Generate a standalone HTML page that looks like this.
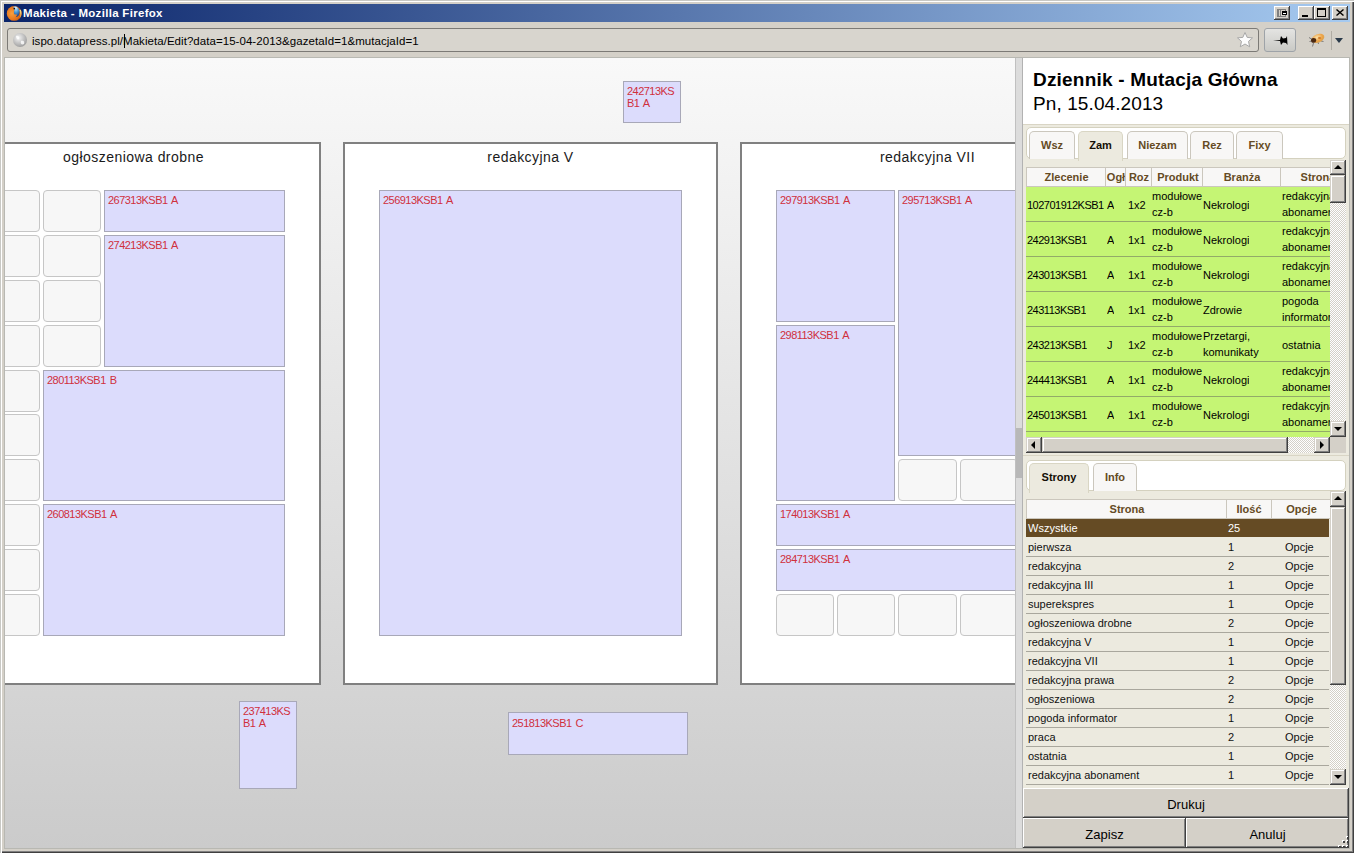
<!DOCTYPE html><html><head><meta charset="utf-8"><style>
*{margin:0;padding:0;box-sizing:border-box}
html,body{width:1354px;height:853px;overflow:hidden;background:#d4d0c8;font-family:"Liberation Sans",sans-serif}
.a{position:absolute}
.wb{position:absolute;top:2px;width:16px;height:14px;background:#d4d0c8;box-shadow:inset -1px -1px 0 #404040, inset 1px 1px 0 #fff, inset -2px -2px 0 #808080}
.page{position:absolute;width:375px;height:543px;border:2px solid #808080;background:#fff}
.ptitle{position:absolute;left:0;top:5px;width:371px;text-align:center;font:14px/16px "Liberation Sans",sans-serif;letter-spacing:0.45px;color:#1a1a1a}
.blk{position:absolute;background:#dcdcfc;border:1px solid #a8a8b8;color:#d0303c;font:11px/12px "Liberation Sans",sans-serif;letter-spacing:-0.53px;word-spacing:1.5px;padding:3px 0 0 3px;overflow:hidden;white-space:nowrap}
.emp{position:absolute;background:#f7f7f7;border:1px solid #c6c6c6;border-radius:4px}
.btn3d{position:absolute;background:#d4d0c8;box-shadow:inset -1px -1px 0 #404040, inset 1px 1px 0 #fff, inset -2px -2px 0 #808080, inset 2px 2px 0 #d4d0c8}
.sbb{position:absolute;width:16px;height:16px;background:#d4d0c8;box-shadow:inset -1px -1px 0 #404040, inset 1px 1px 0 #d4d0c8, inset -2px -2px 0 #808080, inset 2px 2px 0 #fff}
.track{position:absolute;background:repeating-conic-gradient(#d4d0c8 0 25%,#fff 0 50%) 0 0/2px 2px}
.tri-u{position:absolute;width:0;height:0;border-left:4px solid transparent;border-right:4px solid transparent;border-bottom:4px solid #000}
.tri-d{position:absolute;width:0;height:0;border-left:4px solid transparent;border-right:4px solid transparent;border-top:4px solid #000}
.tri-l{position:absolute;width:0;height:0;border-top:4px solid transparent;border-bottom:4px solid transparent;border-right:4px solid #000}
.tri-r{position:absolute;width:0;height:0;border-top:4px solid transparent;border-bottom:4px solid transparent;border-left:4px solid #000}
.tab{position:absolute;height:28px;border:1px solid #cbc7bd;border-bottom:none;border-radius:5px 5px 0 0;background:#f8f7f6;color:#654b24;font:bold 11px/13px "Liberation Sans",sans-serif;text-align:center;padding-top:7px}
.tab.act{background:#eceadf;border-color:#d9d6c4;color:#140f06;height:30px}
.hdr{position:absolute;background:#f8f7f6;border-top:1px solid #cbc7bd;border-bottom:1px solid #cbc7bd;height:20px}
.hc{position:absolute;top:0;height:18px;border-left:1px solid #cbc7bd;color:#654b24;font:bold 11px/18px "Liberation Sans",sans-serif;text-align:center;white-space:nowrap;overflow:hidden}
.gr{position:absolute;left:0;height:35px;background:#c5f574;border-bottom:1px solid #93ab68}
.gc{position:absolute;font:11px/16px "Liberation Sans",sans-serif;color:#000;white-space:nowrap;overflow:hidden}
.sr{position:absolute;left:0;width:303px;height:19px;border-bottom:1px solid #a6a49a;font:11px/18px "Liberation Sans",sans-serif;color:#111}
.sr span{position:absolute;top:0;white-space:nowrap}
</style></head><body>
<div class="a" style="left:0;top:0;width:1354px;height:853px;background:#d4d0c8;box-shadow:inset 1px 1px 0 #c8c8c4, inset 2px 2px 0 #fff, inset -1px -1px 0 #404040, inset -2px -2px 0 #808080"></div>
<div class="a" style="left:4px;top:4px;width:1346px;height:18px;background:linear-gradient(to right,#0a246a,#a6caf0)">
<svg class="a" style="left:2px;top:1px" width="16" height="16" viewBox="0 0 16 16">
<defs><radialGradient id="gl" cx="0.4" cy="0.1" r="0.9"><stop offset="0" stop-color="#e0f6ff"/><stop offset="0.5" stop-color="#4a9ad8"/><stop offset="1" stop-color="#183c80"/></radialGradient>
<radialGradient id="fx" cx="0.35" cy="0.5" r="0.7"><stop offset="0" stop-color="#f6a040"/><stop offset="0.6" stop-color="#e8761c"/><stop offset="0.9" stop-color="#c85a14"/><stop offset="1" stop-color="#a04010"/></radialGradient>
<linearGradient id="tl" x1="0" y1="0" x2="0" y2="1"><stop offset="0" stop-color="#ffe890"/><stop offset="1" stop-color="#e89030"/></linearGradient></defs>
<circle cx="8.2" cy="8.4" r="7.4" fill="url(#fx)"/>
<path d="M14.6 4.5 C16 7 16 11 13.5 13.5 C14.5 11 14.6 8 13.2 5.5Z" fill="url(#tl)"/>
<path d="M7.5 1.6 C10.5 1 13.5 3 13.6 7 C13.7 10 11.8 12 9.6 12.2 C11 11 11.2 9.8 10.4 9.2 C9.4 9.8 8.2 9.4 8 8.4 C7.6 7 8.6 6 8 4.6 C7.8 3.6 7.4 2.6 7.5 1.6Z" fill="url(#gl)"/>
<circle cx="8.3" cy="3.6" r="0.85" fill="#101010"/>
</svg>
<div class="a" style="left:19px;top:2px;font:bold 11.5px/14px 'Liberation Sans',sans-serif;color:#fff;letter-spacing:0.3px;white-space:nowrap">Makieta - Mozilla Firefox</div>
<div class="wb" style="left:1270px"><div class="a" style="left:3px;top:3px;width:9px;height:8px;border:1px solid #808080;border-bottom-width:1px"></div><div class="a" style="left:4px;top:4px;width:1px;height:6px;background:#808080"></div><div class="a" style="left:6px;top:4px;width:1px;height:6px;background:#808080"></div><div class="a" style="left:8px;top:5px;width:5px;height:4px;border:1px solid #000;border-top-width:2px;background:#fff"></div></div>
<div class="wb" style="left:1294px"><div class="a" style="left:4px;top:9px;width:6px;height:2px;background:#000"></div></div>
<div class="wb" style="left:1310px"><div class="a" style="left:3px;top:2px;width:9px;height:9px;border:1px solid #000;border-top-width:2px"></div></div>
<div class="wb" style="left:1328px"><svg class="a" style="left:4px;top:3px" width="8" height="7" viewBox="0 0 8 7"><path d="M0.5 0.5 L7.5 6.5 M7.5 0.5 L0.5 6.5" stroke="#000" stroke-width="1.4"/></svg></div>
</div>
<div class="a" style="left:7px;top:28px;width:1252px;height:24px;border:1px solid #7c7a76;border-radius:3px;background:#d8d5ce"></div>
<svg class="a" style="left:12px;top:32px" width="16" height="16" viewBox="0 0 16 16"><defs><radialGradient id="gb" cx="0.4" cy="0.35" r="0.7"><stop offset="0" stop-color="#f4f4f4"/><stop offset="1" stop-color="#9a9a9a"/></radialGradient></defs>
<circle cx="8" cy="8" r="7" fill="url(#gb)"/><path d="M4 4 C6 3 8 5 7 7 C6 8 4 7 4 4Z M9 9 C11 8 13 9 12 12 C10 13 8 12 9 9Z" fill="#fff" opacity="0.8"/></svg>
<div class="a" style="left:32px;top:34px;font:11.5px/14px 'Liberation Sans',sans-serif;color:#000;white-space:nowrap;letter-spacing:0.05px">ispo.datapress.pl/Makieta/Edit?data=15-04-2013&amp;gazetaId=1&amp;mutacjaId=1</div>
<div class="a" style="left:124px;top:34px;width:1px;height:14px;background:#000"></div>
<svg class="a" style="left:1236px;top:31px" width="18" height="18" viewBox="0 0 18 18"><path d="M9 1.5 L11.2 6.4 L16.5 6.9 L12.5 10.4 L13.7 15.8 L9 13 L4.3 15.8 L5.5 10.4 L1.5 6.9 L6.8 6.4Z" fill="#fdfdfd" stroke="#a8a8a8" stroke-width="1" stroke-linejoin="round"/></svg>
<div class="a" style="left:1264px;top:28px;width:32px;height:24px;border:1px solid #9ea3a8;border-radius:3px;background:linear-gradient(#e4e4e2,#c9c9c5)"></div>
<svg class="a" style="left:1272px;top:35px" width="17" height="11" viewBox="0 0 17 11"><path d="M1 5.5 L8 5 L9 1 L11 3.5 L14 3 L15 1 L15.5 10 L14 8 L11 7.5 L9 10 L8 6 Z" fill="#000"/></svg>
<svg class="a" style="left:1306px;top:31px" width="20" height="18" viewBox="0 0 20 18">
<defs><radialGradient id="bg1" cx="0.45" cy="0.35" r="0.7"><stop offset="0" stop-color="#fbe0a8"/><stop offset="0.6" stop-color="#eca448"/><stop offset="1" stop-color="#d8a050"/></radialGradient></defs>
<path d="M3 6.5 L5.5 8 M3.5 10.5 L5.5 10 M6.5 15.5 L7.5 12 M17.5 10.5 L15 10 M12.5 13 L12 11" stroke="#707070" stroke-width="0.9"/>
<ellipse cx="12" cy="7.3" rx="6.6" ry="4.2" fill="url(#bg1)" transform="rotate(-22 12 7.3)"/>
<ellipse cx="7.6" cy="9.4" rx="2.6" ry="2.3" fill="#3a1a08" opacity="0.9"/>
<ellipse cx="13.5" cy="7" rx="1.6" ry="1.1" fill="#c86a18" opacity="0.8"/>
</svg>
<div class="a" style="left:1331px;top:31px;width:1px;height:19px;background:#b0aca4"></div>
<div class="a" style="left:1335px;top:38px;width:0;height:0;border-left:4px solid transparent;border-right:4px solid transparent;border-top:5px solid #2a3a4a"></div>
<div class="a" style="left:4px;top:57px;width:1346px;height:792px;border:1px solid #b8b8b2;background:#fff"></div>
<div class="a" style="left:5px;top:58px;width:1010px;height:790px;overflow:hidden;background:linear-gradient(#f9f9f9,#cbcbcb)">
<div class="page" style="left:-59.00px;top:84.00px;width:375.00px;height:543.00px"><div class="ptitle">ogłoszeniowa drobne</div></div>
<div class="emp" style="left:-23.00px;top:132.00px;width:58.00px;height:42.00px"></div>
<div class="emp" style="left:38.00px;top:132.00px;width:58.00px;height:42.00px"></div>
<div class="emp" style="left:-23.00px;top:177.00px;width:58.00px;height:42.00px"></div>
<div class="emp" style="left:38.00px;top:177.00px;width:58.00px;height:42.00px"></div>
<div class="emp" style="left:-23.00px;top:222.00px;width:58.00px;height:42.00px"></div>
<div class="emp" style="left:38.00px;top:222.00px;width:58.00px;height:42.00px"></div>
<div class="emp" style="left:-23.00px;top:267.00px;width:58.00px;height:42.00px"></div>
<div class="emp" style="left:38.00px;top:267.00px;width:58.00px;height:42.00px"></div>
<div class="blk" style="left:99.00px;top:132.00px;width:181.00px;height:42.00px">267313KSB1 A</div>
<div class="blk" style="left:99.00px;top:177.00px;width:181.00px;height:132.00px">274213KSB1 A</div>
<div class="emp" style="left:-23.00px;top:312.00px;width:58.00px;height:42.00px"></div>
<div class="emp" style="left:-23.00px;top:356.00px;width:58.00px;height:42.00px"></div>
<div class="emp" style="left:-23.00px;top:401.00px;width:58.00px;height:42.00px"></div>
<div class="emp" style="left:-23.00px;top:446.00px;width:58.00px;height:42.00px"></div>
<div class="emp" style="left:-23.00px;top:491.00px;width:58.00px;height:42.00px"></div>
<div class="emp" style="left:-23.00px;top:536.00px;width:58.00px;height:42.00px"></div>
<div class="blk" style="left:38.00px;top:312.00px;width:242.00px;height:131.00px">280113KSB1 B</div>
<div class="blk" style="left:38.00px;top:446.00px;width:242.00px;height:132.00px">260813KSB1 A</div>
<div class="page" style="left:338.00px;top:84.00px;width:375.00px;height:543.00px"><div class="ptitle">redakcyjna V</div></div>
<div class="blk" style="left:374.00px;top:132.00px;width:303.00px;height:446.00px">256913KSB1 A</div>
<div class="page" style="left:735.00px;top:84.00px;width:375.00px;height:543.00px"><div class="ptitle">redakcyjna VII</div></div>
<div class="blk" style="left:771.00px;top:132.00px;width:119.00px;height:132.00px">297913KSB1 A</div>
<div class="blk" style="left:893.00px;top:132.00px;width:181.00px;height:266.00px">295713KSB1 A</div>
<div class="blk" style="left:771.00px;top:267.00px;width:119.00px;height:176.00px">298113KSB1 A</div>
<div class="emp" style="left:893.00px;top:401.00px;width:59.00px;height:42.00px"></div>
<div class="emp" style="left:955.00px;top:401.00px;width:58.00px;height:42.00px"></div>
<div class="emp" style="left:1016.00px;top:401.00px;width:58.00px;height:42.00px"></div>
<div class="blk" style="left:771.00px;top:446.00px;width:303.00px;height:42.00px">174013KSB1 A</div>
<div class="blk" style="left:771.00px;top:491.00px;width:303.00px;height:42.00px">284713KSB1 A</div>
<div class="emp" style="left:771.00px;top:536.00px;width:58.00px;height:42.00px"></div>
<div class="emp" style="left:832.00px;top:536.00px;width:58.00px;height:42.00px"></div>
<div class="emp" style="left:893.00px;top:536.00px;width:59.00px;height:42.00px"></div>
<div class="emp" style="left:955.00px;top:536.00px;width:58.00px;height:42.00px"></div>
<div class="emp" style="left:1016.00px;top:536.00px;width:58.00px;height:42.00px"></div>
<div class="blk" style="left:618.00px;top:23.00px;width:58.00px;height:42.00px">242713KS<br>B1 A</div>
<div class="blk" style="left:234.00px;top:643.00px;width:58.00px;height:88.00px">237413KS<br>B1 A</div>
<div class="blk" style="left:503.00px;top:654.00px;width:180.00px;height:43.00px;padding-top:4px">251813KSB1 C</div>
</div>
<div class="a" style="left:1015px;top:58px;width:8px;height:790px;background:#dcdcdc;border-left:1px solid #c0c0c0;border-right:1px solid #b2b2b2"></div>
<div class="a" style="left:1016px;top:428px;width:6px;height:50px;background:#b8b8b8"></div>
<div class="a" style="left:1023px;top:58px;width:326px;height:790px;background:#fff;overflow:hidden">
<div class="a" style="left:10px;top:10.6px;font:bold 19px/22px 'Liberation Sans',sans-serif;color:#000;white-space:nowrap;letter-spacing:0.2px">Dziennik - Mutacja Główna</div>
<div class="a" style="left:10px;top:35px;font:19px/22px 'Liberation Sans',sans-serif;color:#000;white-space:nowrap;letter-spacing:0.1px">Pn, 15.04.2013</div>
<div class="a" style="left:0px;top:66px;width:326px;height:332px;background:#eceadf;border-top:1px solid #d9d5c5;border-bottom:1px solid #d9d5c5"></div>
<div class="a" style="left:0px;top:398px;width:326px;height:332px;background:#eceadf"></div>
<div class="a" style="left:3px;top:69px;width:320px;height:32px;background:#fff;border:1px solid #d4d1bf;border-radius:5px"></div>
<div class="tab" style="left:6px;top:73px;width:46px;height:28px">Wsz</div>
<div class="tab act" style="left:55px;top:73px;width:45px;height:30px">Zam</div>
<div class="tab" style="left:104px;top:73px;width:61px;height:28px">Niezam</div>
<div class="tab" style="left:167px;top:73px;width:44px;height:28px">Rez</div>
<div class="tab" style="left:213px;top:73px;width:47px;height:28px">Fixy</div>
<div class="a" style="left:3px;top:102px;width:304px;height:277px;overflow:hidden">
<div class="hdr" style="left:0px;top:7px;width:330px;height:20px">
<div class="hc" style="left:0px;width:80px">Zlecenie</div>
<div class="hc" style="left:79px;width:21px">Ogł</div>
<div class="hc" style="left:99px;width:27px">Roz</div>
<div class="hc" style="left:125px;width:53px">Produkt</div>
<div class="hc" style="left:176px;width:79px">Branża</div>
<div class="hc" style="left:254px;width:75px">Strona</div>
</div>
<div class="gr" style="top:27px;width:330px">
<div class="gc" style="left:1px;top:10.0px;letter-spacing:-0.5px">102701912KSB1</div>
<div class="gc" style="left:81px;top:10.0px">A</div>
<div class="gc" style="left:102px;top:10.0px">1x2</div>
<div class="gc" style="left:126px;top:1.0px">modułowe<br>cz-b</div>
<div class="gc" style="left:177px;top:10.0px">Nekrologi</div>
<div class="gc" style="left:256px;top:1.0px">redakcyjna<br>abonament</div>
</div>
<div class="gr" style="top:62px;width:330px">
<div class="gc" style="left:1px;top:10.0px;letter-spacing:-0.5px">242913KSB1</div>
<div class="gc" style="left:81px;top:10.0px">A</div>
<div class="gc" style="left:102px;top:10.0px">1x1</div>
<div class="gc" style="left:126px;top:1.0px">modułowe<br>cz-b</div>
<div class="gc" style="left:177px;top:10.0px">Nekrologi</div>
<div class="gc" style="left:256px;top:1.0px">redakcyjna<br>abonament</div>
</div>
<div class="gr" style="top:97px;width:330px">
<div class="gc" style="left:1px;top:10.0px;letter-spacing:-0.5px">243013KSB1</div>
<div class="gc" style="left:81px;top:10.0px">A</div>
<div class="gc" style="left:102px;top:10.0px">1x1</div>
<div class="gc" style="left:126px;top:1.0px">modułowe<br>cz-b</div>
<div class="gc" style="left:177px;top:10.0px">Nekrologi</div>
<div class="gc" style="left:256px;top:1.0px">redakcyjna<br>abonament</div>
</div>
<div class="gr" style="top:132px;width:330px">
<div class="gc" style="left:1px;top:10.0px;letter-spacing:-0.5px">243113KSB1</div>
<div class="gc" style="left:81px;top:10.0px">A</div>
<div class="gc" style="left:102px;top:10.0px">1x1</div>
<div class="gc" style="left:126px;top:1.0px">modułowe<br>cz-b</div>
<div class="gc" style="left:177px;top:10.0px">Zdrowie</div>
<div class="gc" style="left:256px;top:1.0px">pogoda<br>informator</div>
</div>
<div class="gr" style="top:167px;width:330px">
<div class="gc" style="left:1px;top:10.0px;letter-spacing:-0.5px">243213KSB1</div>
<div class="gc" style="left:81px;top:10.0px">J</div>
<div class="gc" style="left:102px;top:10.0px">1x2</div>
<div class="gc" style="left:126px;top:1.0px">modułowe<br>cz-b</div>
<div class="gc" style="left:177px;top:1.0px">Przetargi,<br>komunikaty</div>
<div class="gc" style="left:256px;top:10.0px">ostatnia</div>
</div>
<div class="gr" style="top:202px;width:330px">
<div class="gc" style="left:1px;top:10.0px;letter-spacing:-0.5px">244413KSB1</div>
<div class="gc" style="left:81px;top:10.0px">A</div>
<div class="gc" style="left:102px;top:10.0px">1x1</div>
<div class="gc" style="left:126px;top:1.0px">modułowe<br>cz-b</div>
<div class="gc" style="left:177px;top:10.0px">Nekrologi</div>
<div class="gc" style="left:256px;top:1.0px">redakcyjna<br>abonament</div>
</div>
<div class="gr" style="top:237px;width:330px">
<div class="gc" style="left:1px;top:10.0px;letter-spacing:-0.5px">245013KSB1</div>
<div class="gc" style="left:81px;top:10.0px">A</div>
<div class="gc" style="left:102px;top:10.0px">1x1</div>
<div class="gc" style="left:126px;top:1.0px">modułowe<br>cz-b</div>
<div class="gc" style="left:177px;top:10.0px">Nekrologi</div>
<div class="gc" style="left:256px;top:1.0px">redakcyjna<br>abonament</div>
</div>
<div class="gr" style="top:272px;width:330px">
<div class="gc" style="left:1px;top:10.0px;letter-spacing:-0.5px">245113KSB1</div>
<div class="gc" style="left:81px;top:10.0px">A</div>
<div class="gc" style="left:102px;top:10.0px">1x1</div>
<div class="gc" style="left:126px;top:1.0px">modułowe<br>cz-b</div>
<div class="gc" style="left:177px;top:10.0px">Nekrologi</div>
<div class="gc" style="left:256px;top:1.0px">redakcyjna<br>abonament</div>
</div>
</div>
<div class="track" style="left:307px;top:118px;width:16px;height:261px"></div>
<div class="sbb" style="left:307px;top:102px;width:16px;height:15px"><div class="tri-u" style="left:4px;top:5px"></div></div>
<div class="sbb" style="left:307px;top:117px;width:16px;height:28px"></div>
<div class="sbb" style="left:307px;top:363px;width:16px;height:16px"><div class="tri-d" style="left:4px;top:6px"></div></div>
<div class="track" style="left:3px;top:379px;width:304px;height:16px"></div>
<div class="sbb" style="left:3px;top:379px;width:16px;height:16px"><div class="tri-l" style="left:5px;top:4px"></div></div>
<div class="sbb" style="left:19px;top:379px;width:246px;height:16px"></div>
<div class="sbb" style="left:291px;top:379px;width:16px;height:16px"><div class="tri-r" style="left:6px;top:4px"></div></div>
<div class="a" style="left:307px;top:379px;width:16px;height:16px;background:#d4d0c8"></div>
<div class="a" style="left:3px;top:402px;width:320px;height:31px;background:#fff;border:1px solid #d4d1bf;border-radius:5px"></div>
<div class="tab act" style="left:6px;top:405px;width:60px;height:30px">Strony</div>
<div class="tab" style="left:70px;top:405px;width:44px;height:28px">Info</div>
<div class="a" style="left:3px;top:441px;width:304px;height:286px;overflow:hidden">
<div class="hdr" style="left:0;top:0;width:304px;height:20px;border-left:1px solid #cbc7bd">
<div class="hc" style="left:0px;width:200px;border-left:none">Strona</div>
<div class="hc" style="left:199px;width:45px;">Ilość</div>
<div class="hc" style="left:244px;width:60px;">Opcje</div>
</div>
<div class="sr" style="top:20px;height:18px;background:#654b24;color:#fff;border-bottom:none"><span style="left:2px;top:0px">Wszystkie</span><span style="left:202px;top:0px">25</span></div>
<div class="sr" style="top:39px;border-bottom-color:#a9a79d"><span style="left:2px">pierwsza</span><span style="left:202px">1</span><span style="left:259px">Opcje</span></div>
<div class="sr" style="top:58px;border-bottom-color:#a9a79d"><span style="left:2px">redakcyjna</span><span style="left:202px">2</span><span style="left:259px">Opcje</span></div>
<div class="sr" style="top:77px;border-bottom-color:#a9a79d"><span style="left:2px">redakcyjna III</span><span style="left:202px">1</span><span style="left:259px">Opcje</span></div>
<div class="sr" style="top:96px;border-bottom-color:#a9a79d"><span style="left:2px">superekspres</span><span style="left:202px">1</span><span style="left:259px">Opcje</span></div>
<div class="sr" style="top:115px;border-bottom-color:#a9a79d"><span style="left:2px">ogłoszeniowa drobne</span><span style="left:202px">2</span><span style="left:259px">Opcje</span></div>
<div class="sr" style="top:134px;border-bottom-color:#a9a79d"><span style="left:2px">redakcyjna V</span><span style="left:202px">1</span><span style="left:259px">Opcje</span></div>
<div class="sr" style="top:153px;border-bottom-color:#a9a79d"><span style="left:2px">redakcyjna VII</span><span style="left:202px">1</span><span style="left:259px">Opcje</span></div>
<div class="sr" style="top:172px;border-bottom-color:#a9a79d"><span style="left:2px">redakcyjna prawa</span><span style="left:202px">2</span><span style="left:259px">Opcje</span></div>
<div class="sr" style="top:191px;border-bottom-color:#a9a79d"><span style="left:2px">ogłoszeniowa</span><span style="left:202px">2</span><span style="left:259px">Opcje</span></div>
<div class="sr" style="top:210px;border-bottom-color:#a9a79d"><span style="left:2px">pogoda informator</span><span style="left:202px">1</span><span style="left:259px">Opcje</span></div>
<div class="sr" style="top:229px;border-bottom-color:#a9a79d"><span style="left:2px">praca</span><span style="left:202px">2</span><span style="left:259px">Opcje</span></div>
<div class="sr" style="top:248px;border-bottom-color:#a9a79d"><span style="left:2px">ostatnia</span><span style="left:202px">1</span><span style="left:259px">Opcje</span></div>
<div class="sr" style="top:267px;border-bottom-color:#a9a79d"><span style="left:2px">redakcyjna abonament</span><span style="left:202px">1</span><span style="left:259px">Opcje</span></div>
</div>
<div class="track" style="left:307px;top:433px;width:16px;height:294px"></div>
<div class="sbb" style="left:307px;top:433px;width:16px;height:16px"><div class="tri-u" style="left:4px;top:5px"></div></div>
<div class="sbb" style="left:307px;top:449px;width:16px;height:178px"></div>
<div class="sbb" style="left:307px;top:711px;width:16px;height:16px"><div class="tri-d" style="left:4px;top:6px"></div></div>
<div class="btn3d" style="left:0px;top:730px;width:326px;height:30px;font:13px/33px 'Liberation Sans',sans-serif;color:#000;text-align:center">Drukuj</div>
<div class="btn3d" style="left:0px;top:760px;width:163px;height:30px;font:13px/33px 'Liberation Sans',sans-serif;color:#000;text-align:center">Zapisz</div>
<div class="btn3d" style="left:163px;top:760px;width:163px;height:30px;font:13px/33px 'Liberation Sans',sans-serif;color:#000;text-align:center">Anuluj</div>
</div>
<div class="a" style="left:1347px;top:837px;width:2px;height:2px;background:#404040;box-shadow:-1px -1px 0 #fff"></div>
<div class="a" style="left:1343px;top:841px;width:2px;height:2px;background:#404040;box-shadow:-1px -1px 0 #fff"></div>
<div class="a" style="left:1347px;top:841px;width:2px;height:2px;background:#404040;box-shadow:-1px -1px 0 #fff"></div>
<div class="a" style="left:1339px;top:846px;width:2px;height:2px;background:#404040;box-shadow:-1px -1px 0 #fff"></div>
<div class="a" style="left:1343px;top:846px;width:2px;height:2px;background:#404040;box-shadow:-1px -1px 0 #fff"></div>
<div class="a" style="left:1347px;top:846px;width:2px;height:2px;background:#404040;box-shadow:-1px -1px 0 #fff"></div>
</body></html>
